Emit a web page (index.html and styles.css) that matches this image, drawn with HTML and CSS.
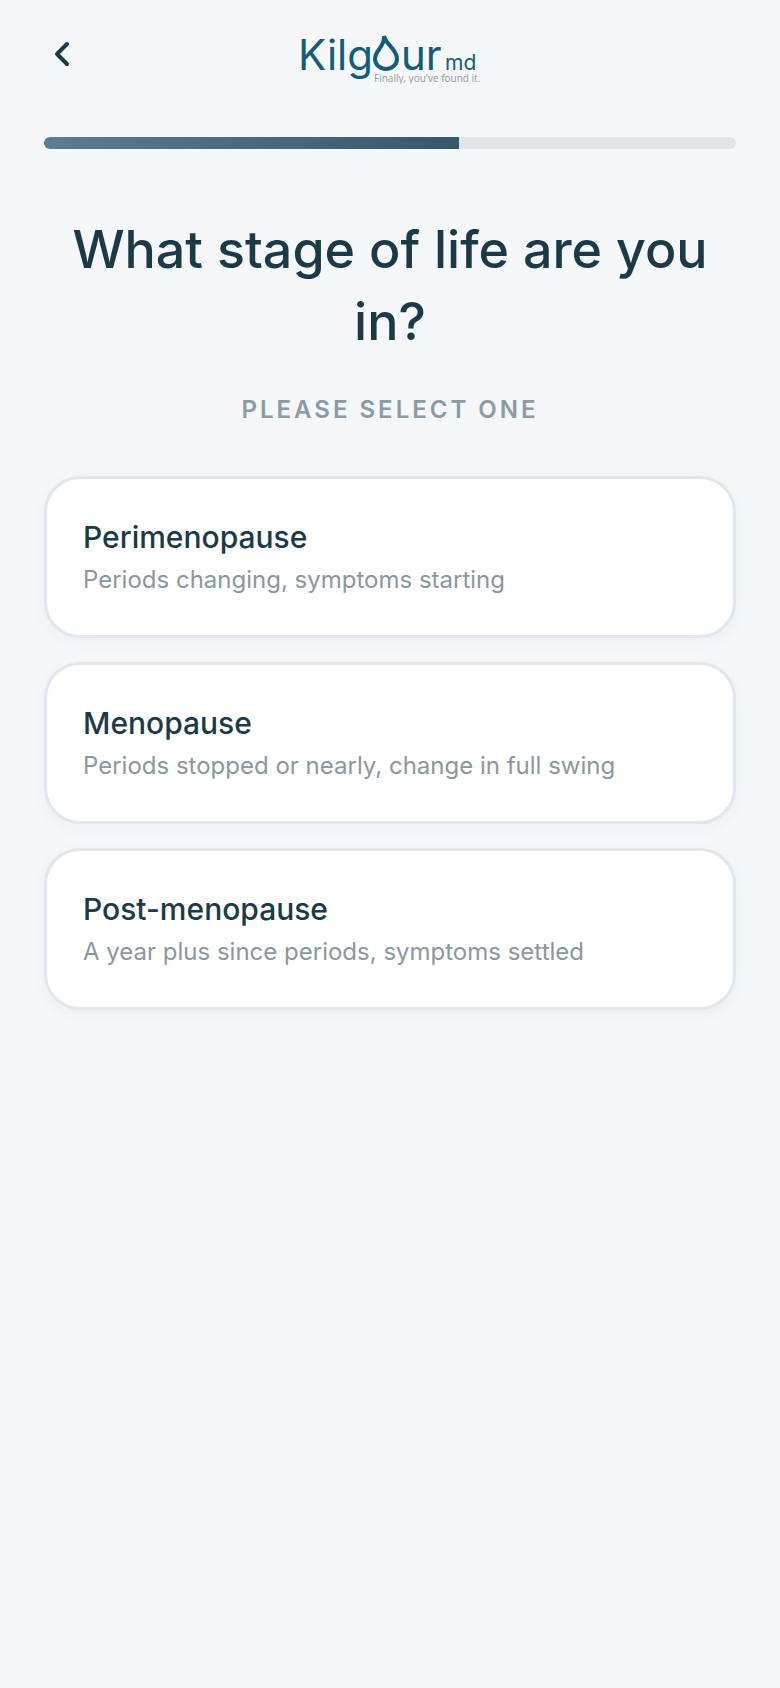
FILE: index.html
```html
<!DOCTYPE html>
<html lang="en">

<head>
    <meta charset="UTF-8">
    <meta name="viewport" content="width=device-width, initial-scale=1">
    <title>KilgourMD Quiz</title>
    <link rel="stylesheet" href="styles.css">
</head>

<body>
    <div class="container">
        <header class="header">
            <button class="back" type="button" aria-label="Back">
                <svg width="16" height="26" viewBox="0 0 16 26" fill="none">
                    <path d="M13 3L3 13L13 23" stroke="currentColor" stroke-width="4" stroke-linecap="round" stroke-linejoin="round" />
                </svg>
            </button>
            <svg class="logo" width="184" height="60" viewBox="0 0 184 60" role="img" aria-label="Kilgour md">
                <text class="logo-name" x="0" y="46">Kilg</text>
                <!-- water drop used as the letter o -->
                <path d="M86 12C88 21 99 25 99 35A11 10 0 0 1 77 35C77 26 87 23 86 12Z" fill="none" stroke="#135d78" stroke-width="4" />
                <text class="logo-name" x="103" y="46">ur</text>
                <text class="logo-md" x="147" y="46">md</text>
                <text class="logo-tag" x="76" y="58">Finally, you've found it.</text>
            </svg>
        </header>

        <div class="progress" role="progressbar" aria-label="Quiz progress" aria-valuemin="0" aria-valuemax="100" aria-valuenow="60">
            <div class="progress-bar" style="width: 60%"></div>
        </div>

        <main>
            <h1>What stage of life are you in?</h1>
            <p class="hint">PLEASE SELECT ONE</p>

            <div class="options">
                <button class="option" type="button">
                    <span class="option-title">Perimenopause</span>
                    <span class="option-text">Periods changing, symptoms starting</span>
                </button>
                <button class="option" type="button">
                    <span class="option-title">Menopause</span>
                    <span class="option-text">Periods stopped or nearly, change in full swing</span>
                </button>
                <button class="option" type="button">
                    <span class="option-title">Post-menopause</span>
                    <span class="option-text">A year plus since periods, symptoms settled</span>
                </button>
            </div>
        </main>
    </div>
</body>

</html>
```

FILE: styles.css
```css
* {
    box-sizing: border-box;
}

body {
    margin: 0;
    font-family: Inter, "Liberation Sans", sans-serif;
    background-color: #f5f7f9;
    color: #1a3a47;
}

.container {
    padding: 24px 44px;
}

.header {
    display: grid;
    grid-template-columns: 36px 1fr 36px;
    align-items: center;
    margin-bottom: 53px;
}

.back {
    display: flex;
    justify-content: center;
    padding: 0;
    border: none;
    background: none;
    color: #1a3a47;
    cursor: pointer;
}

.logo {
    justify-self: center;
}

.logo-name {
    font-size: 42px;
    fill: #135d78;
}

.logo-md {
    font-size: 21px;
    fill: #135d78;
}

.logo-tag {
    font-family: "Open Sans", sans-serif;
    font-size: 10px;
    fill: #929a9f;
}

.progress {
    height: 12px;
    border-radius: 6px;
    background-color: #e2e5e7;
    overflow: hidden;
}

.progress-bar {
    height: 100%;
    background: linear-gradient(90deg, #5a7d8f, #34596b);
}

h1 {
    margin: 65px 0 0;
    font-size: 52px;
    font-weight: 500;
    line-height: 72px;
    text-align: center;
}

.hint {
    margin: 36px 0 50px;
    font-size: 24px;
    font-weight: 600;
    line-height: 32px;
    letter-spacing: 3px;
    text-align: center;
    color: #8a9ba8;
}

.options {
    display: flex;
    flex-direction: column;
    gap: 24px;
}

.option {
    display: flex;
    flex-direction: column;
    gap: 6px;
    padding: 38px 36px;
    border: 3px solid #e1e7ed;
    border-radius: 36px;
    background-color: #fff;
    box-shadow: 0 4px 16px rgba(26, 58, 71, 0.04);
    font-family: inherit;
    text-align: left;
    cursor: pointer;
}

.option-title {
    font-size: 30px;
    font-weight: 500;
    line-height: 40px;
    color: #1a3a47;
}

.option-text {
    font-size: 24px;
    line-height: 34px;
    color: #8a979f;
}
```
